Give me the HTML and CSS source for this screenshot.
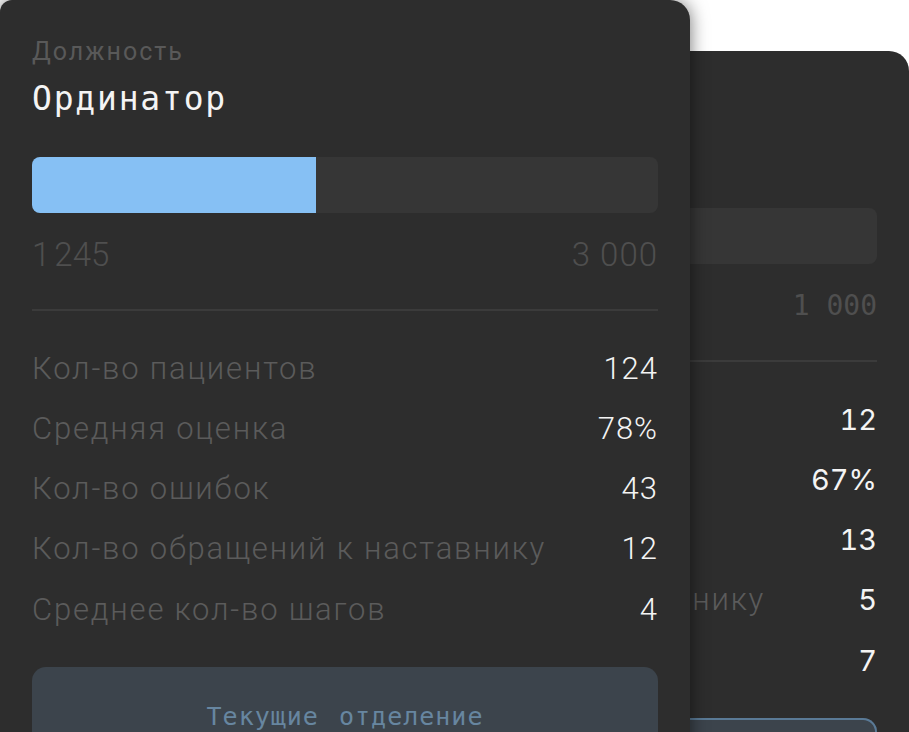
FILE: index.html
```html
<!DOCTYPE html>
<html lang="ru">
<head>
  <meta charset="UTF-8" />
  <title>Карточка ординатора</title>
  <link rel="stylesheet" href="styles.css">
</head>
<body>
  <div class="stage">
    <!-- card underneath, only its right part shows -->
    <section class="card card--back">
      <p class="card-caption">Должность</p>
      <h2 class="card-title">Интерн</h2>
      <div class="progress"><div class="progress-fill" style="width: 48%"></div></div>
      <div class="range"><span>480</span><span>1&#8239;000</span></div>
      <hr class="divider">
      <dl class="stats">
        <div class="stat"><dt>Кол-во пациентов</dt><dd>12</dd></div>
        <div class="stat"><dt>Средняя оценка</dt><dd>67%</dd></div>
        <div class="stat"><dt>Кол-во ошибок</dt><dd>13</dd></div>
        <div class="stat"><dt>Кол-во обращений к наставнику</dt><dd>5</dd></div>
        <div class="stat"><dt>Среднее кол-во шагов</dt><dd>7</dd></div>
      </dl>
      <button class="dept dept--active">Текущие отделение</button>
    </section>

    <section class="card card--front">
      <p class="card-caption">Должность</p>
      <h2 class="card-title">Ординатор</h2>
      <div class="progress"><div class="progress-fill" style="width: 45.4%"></div></div>
      <div class="range"><span>1&#8239;245</span><span>3&nbsp;000</span></div>
      <hr class="divider">
      <dl class="stats">
        <div class="stat"><dt>Кол-во пациентов</dt><dd>124</dd></div>
        <div class="stat"><dt>Средняя оценка</dt><dd>78%</dd></div>
        <div class="stat"><dt>Кол-во ошибок</dt><dd>43</dd></div>
        <div class="stat"><dt>Кол-во обращений к наставнику</dt><dd>12</dd></div>
        <div class="stat"><dt>Среднее кол-во шагов</dt><dd>4</dd></div>
      </dl>
      <button class="dept">Текущие отделение</button>
    </section>
  </div>
</body>
</html>
```

FILE: styles.css
```css
body {
  margin: 0;
  background: #fff;
  font-family: Roboto, 'Noto Sans', sans-serif;
}

.stage {
  position: relative;
  height: 732px;
  overflow: hidden;
}

.card {
  box-sizing: border-box;
  width: 690px;
  height: 820px;
  padding: 36px 32px 0;
  background: #2d2d2d;
  border-radius: 12px 20px 0 0;
  display: flex;
  flex-direction: column;
}

.card--front {
  position: relative;
  z-index: 2;
  box-shadow: 0 0 18px rgba(0, 0, 0, 0.55);
}

.card--back {
  position: absolute;
  top: 51px;
  left: 219px;
  z-index: 1;
  border-radius: 20px 20px 0 0;
}

.card-caption {
  margin: 0;
  font-size: 25px;
  line-height: 32px;
  letter-spacing: 2px;
  color: #595959;
}

.card-title {
  margin: 11px 0 0;
  font-family: 'DejaVu Sans Mono', monospace;
  font-weight: normal;
  font-size: 33px;
  line-height: 40px;
  letter-spacing: 1.8px;
  color: #f4f4f4;
}

.progress {
  margin-top: 38px;
  height: 56px;
  border-radius: 8px;
  background: #363636;
  overflow: hidden;
}

.progress-fill {
  height: 100%;
  background: #86c0f4;
}

.range {
  display: flex;
  justify-content: space-between;
  margin-top: 22px;
  font-size: 33px;
  font-weight: 300;
  line-height: 40px;
  letter-spacing: 1px;
  color: #4f4f4f;
}

.divider {
  margin: 34px 0 0;
  border: 0;
  height: 2px;
  background: #3b3b3b;
}

.stats {
  margin: 37px 0 0;
  display: flex;
  flex-direction: column;
  gap: 20.25px;
}

.stat {
  display: flex;
  justify-content: space-between;
  align-items: center;
  height: 40px;
  font-size: 31px;
  font-weight: 300;
}

.stat dt {
  letter-spacing: 1.8px;
  color: #5b5b5b;
}

.stat dd {
  margin: 0;
  letter-spacing: 1px;
  color: #f4f4f4;
}

.dept {
  margin-top: 38px;
  height: 110px;
  padding: 0 0 12px;
  border: 0;
  border-radius: 14px;
  background: #3c444c;
  font-family: 'DejaVu Sans Mono', monospace;
  font-size: 25px;
  letter-spacing: 1px;
  word-spacing: 4px;
  color: #6786a0;
}

.dept--active {
  box-shadow: inset 0 0 0 2px #5a7a96;
}

/* the back card was set in other faces */
.card--back .range {
  font-family: 'DejaVu Sans Mono', monospace;
  font-weight: normal;
  font-size: 28px;
  letter-spacing: 0;
}

.card--back .stat dd {
  font-family: Inter, sans-serif;
  font-weight: normal;
  font-size: 29px;
  font-variant-numeric: tabular-nums;
  letter-spacing: 0;
}
```
